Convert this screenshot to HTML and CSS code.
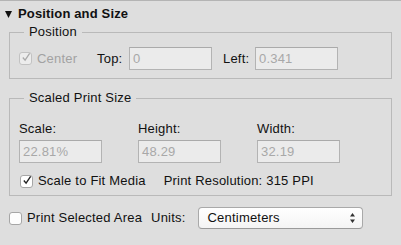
FILE: index.html
```html
<!DOCTYPE html>
<html>
<head>
<meta charset="utf-8">
<link rel="stylesheet" href="styles.css">
</head>
<body>
<div class="pane">
  <div class="section-head">
    <svg class="disclosure" width="7" height="7" viewBox="0 0 7 7"><path d="M0 0H7L3.5 7Z" fill="#111"/></svg>
    <span class="section-title">Position and Size</span>
  </div>

  <fieldset class="group group-position">
    <legend class="group-title">Position</legend>
    <div class="pos-row">
      <span class="check check-disabled">
        <span class="box box-disabled">
          <svg width="11" height="11" viewBox="0 0 11 11"><path d="M2 5.5L4.5 8.5L9.5 1" fill="none" stroke="#a9a9a9" stroke-width="1.4"/></svg>
        </span>
        <span class="check-text">Center</span>
      </span>
      <span class="field-label label-top">Top:</span>
      <span class="field">0</span>
      <span class="field-label label-left">Left:</span>
      <span class="field">0.341</span>
    </div>
  </fieldset>

  <fieldset class="group group-scaled">
    <legend class="group-title">Scaled Print Size</legend>
    <div class="size-grid">
      <span class="col-label">Scale:</span>
      <span class="col-label">Height:</span>
      <span class="col-label">Width:</span>
      <span class="field">22.81%</span>
      <span class="field">48.29</span>
      <span class="field">32.19</span>
    </div>
    <div class="fit-row">
      <span class="check">
        <span class="box">
          <svg width="11" height="11" viewBox="0 0 11 11"><path d="M2 5.5L4.5 8.5L9.5 1" fill="none" stroke="#222" stroke-width="1.5"/></svg>
        </span>
        <span class="check-text">Scale to Fit Media</span>
      </span>
      <span class="resolution">Print Resolution: 315 PPI</span>
    </div>
  </fieldset>

  <div class="bottom-row">
    <span class="check check-plain">
      <span class="box box-empty"></span>
      <span class="check-text">Print Selected Area</span>
    </span>
    <span class="units-label">Units:</span>
    <span class="select">
      <span class="select-value">Centimeters</span>
      <svg class="select-arrows" width="5" height="10" viewBox="0 0 5 10"><path d="M2.5 0L5 3.5H0Z M2.5 10L5 6.5H0Z" fill="#333"/></svg>
    </span>
  </div>
</div>
</body>
</html>
```

FILE: styles.css
```css
html, body {
  margin: 0;
  padding: 0;
}

body {
  width: 401px;
  height: 245px;
  overflow: hidden;
  background: #dedede;
  border-top: 1px solid #b4b4b4;
  box-sizing: border-box;
  font-family: "Liberation Sans", Arial, sans-serif;
  font-size: 13px;
  line-height: 16px;
  letter-spacing: 0.2px;
  color: #111;
}

.pane {
  display: flex;
  flex-direction: column;
}

.section-head {
  display: flex;
  align-items: center;
  padding: 5px 0 0 5px;
  height: 16px;
}

.disclosure {
  display: block;
  margin-right: 6px;
}

.section-title {
  font-weight: bold;
  letter-spacing: 0.15px;
}

.group {
  margin: 0 9px;
  padding: 0 9px;
  border: 1px solid #b9b9b9;
  min-width: 0;
}

.group-title {
  padding: 0 5px;
  margin-left: 5px;
  line-height: 16px;
}

.group-position {
  margin-top: 2px;
  padding-top: 7px;
  padding-bottom: 8px;
}

.group-scaled {
  margin-top: 11px;
  padding-top: 15px;
  padding-bottom: 6px;
}

.pos-row {
  display: flex;
  align-items: center;
  height: 23px;
}

.check {
  display: flex;
  align-items: center;
}

.check-disabled {
  width: 78px;
  color: #a2a2a2;
}

.box {
  width: 13px;
  height: 13px;
  box-sizing: border-box;
  border: 1px solid #a6a6a6;
  border-radius: 3px;
  background: #fff;
  display: flex;
  align-items: center;
  justify-content: center;
  margin-right: 5px;
}

.box svg {
  display: block;
  margin-top: -2px;
  margin-left: 1px;
}

.box-disabled {
  background: #ececec;
  border-color: #c2c2c2;
}

.field-label {
  width: 32px;
}

.label-left {
  margin-left: 11px;
}

.field {
  display: block;
  width: 83px;
  height: 23px;
  box-sizing: border-box;
  border: 1px solid #b3b3b3;
  border-top-color: #aaaaaa;
  background: #ebebeb;
  color: #a8a8a8;
  padding: 3px 3px 0;
  line-height: 16px;
}

.size-grid {
  display: grid;
  grid-template-columns: 83px 83px 83px;
  column-gap: 36px;
  row-gap: 3px;
}

.fit-row {
  display: flex;
  align-items: center;
  margin-top: 10px;
  height: 16px;
}

.fit-row .check {
  margin-left: 1px;
}

.resolution {
  margin-left: 18px;
}

.bottom-row {
  display: flex;
  align-items: center;
  margin-top: 11px;
  padding-left: 9px;
  height: 22px;
}

.box-empty {
  background: #fdfdfd;
}

.units-label {
  margin-left: 9px;
}

.select {
  display: flex;
  align-items: center;
  justify-content: space-between;
  margin-left: 12px;
  width: 165px;
  height: 22px;
  box-sizing: border-box;
  border: 1px solid #a9a9a9;
  border-bottom-color: #9a9a9a;
  border-radius: 4px;
  background: linear-gradient(#ffffff, #f4f4f4);
  padding: 0 7px 0 9px;
}

.select-arrows {
  display: block;
}
```
